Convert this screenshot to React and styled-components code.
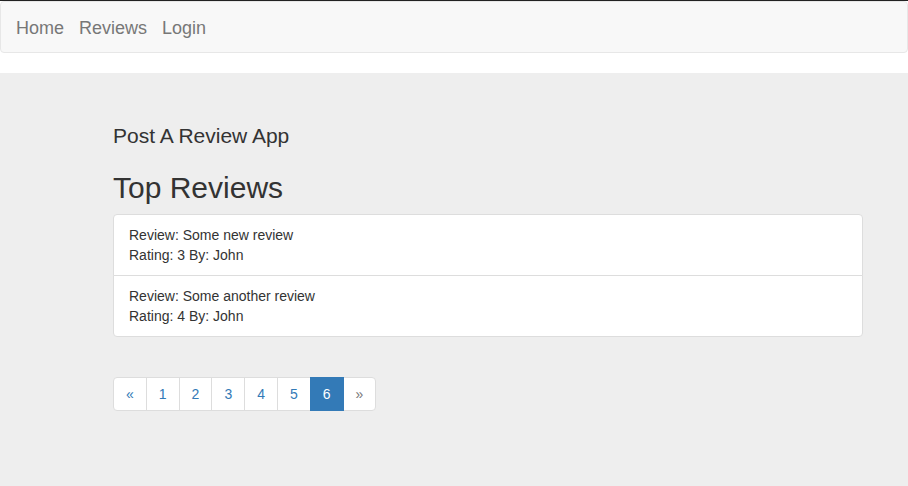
import React from "react";
import styled, { createGlobalStyle } from "styled-components";

const GlobalStyle = createGlobalStyle`
  * {
    box-sizing: border-box;
  }

  body {
    margin: 0;
    border-top: 1px solid #222;
    background: #fff;
    font-family: "Liberation Sans", Arial, sans-serif;
    font-size: 14px;
    line-height: 1.42857143;
    color: #333;
  }
`;

const reviews = [
  { id: 1, text: "Some new review", rating: 3, author: "John" },
  { id: 2, text: "Some another review", rating: 4, author: "John" },
];

const pages = [1, 2, 3, 4, 5, 6];
const currentPage = 6;

const App = () => {
  return (
    <>
      <GlobalStyle />
      <Navbar>
        <NavLink href="#">Home</NavLink>
        <NavLink href="#">Reviews</NavLink>
        <NavLink href="#">Login</NavLink>
      </Navbar>
      <Jumbotron>
        <Container>
          <Lead>Post A Review App</Lead>
          <Heading>Top Reviews</Heading>
          <ListGroup>
            {reviews.map((r) => (
              <ListItem key={r.id}>
                <div>Review: {r.text}</div>
                <div>
                  Rating: {r.rating} By: {r.author}
                </div>
              </ListItem>
            ))}
          </ListGroup>
          <Pagination>
            <PageItem>&laquo;</PageItem>
            {pages.map((p) => (
              <PageItem key={p} $active={p === currentPage}>
                {p}
              </PageItem>
            ))}
            <PageItem $disabled>&raquo;</PageItem>
          </Pagination>
        </Container>
      </Jumbotron>
    </>
  );
};

const Navbar = styled.nav`
  height: 52px;
  display: flex;
  align-items: center;
  gap: 15px;
  padding: 2px 15px 0;
  margin-bottom: 20px;
  background: #f8f8f8;
  border: 1px solid #e7e7e7;
  border-radius: 4px;
`;

const NavLink = styled.a`
  font-size: 18px;
  line-height: 20px;
  color: #777;
  text-decoration: none;
`;

const Jumbotron = styled.main`
  background: #eee;
  padding: 48px 0 60px;
`;

const Container = styled.div`
  width: 750px;
  margin-left: 113px;
`;

const Lead = styled.p`
  margin: 0 0 20px;
  font-size: 21px;
  line-height: 30px;
  font-weight: 400;
`;

const Heading = styled.h2`
  margin: 0 0 10px;
  font-size: 30px;
  line-height: 33px;
  font-weight: 400;
`;

const ListGroup = styled.ul`
  margin: 0 0 20px;
  padding: 0;
  list-style: none;
`;

const ListItem = styled.li`
  background: #fff;
  border: 1px solid #ddd;
  padding: 10px 15px;
  margin-bottom: -1px;

  &:first-child {
    border-radius: 4px 4px 0 0;
  }

  &:last-child {
    margin-bottom: 0;
    border-radius: 0 0 4px 4px;
  }
`;

const Pagination = styled.div`
  display: inline-flex;
  margin: 20px 0;
  vertical-align: top;
`;

const PageItem = styled.a`
  display: block;
  padding: 6px 12px;
  margin-left: -1px;
  line-height: 20px;
  text-decoration: none;
  border: 1px solid ${(p) => (p.$active ? "#337ab7" : "#ddd")};
  background: ${(p) => (p.$active ? "#337ab7" : "#fff")};
  color: ${(p) => (p.$active ? "#fff" : p.$disabled ? "#777" : "#337ab7")};
  position: relative;
  z-index: ${(p) => (p.$active ? 2 : 0)};

  &:first-child {
    margin-left: 0;
    border-radius: 4px 0 0 4px;
  }

  &:last-child {
    border-radius: 0 4px 4px 0;
  }
`;

export default App;
